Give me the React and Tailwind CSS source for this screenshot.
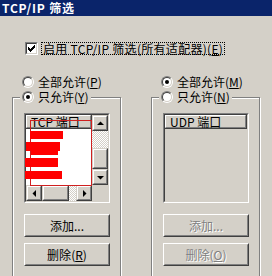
import React from "react";

function Radio({ checked }) {
  return (
    <span className="flex w-[12px] h-[12px] shrink-0 rounded-full border border-t-[#808080] border-l-[#808080] border-r-white border-b-white">
      <span className="flex flex-1 items-center justify-center rounded-full border border-t-[#404040] border-l-[#404040] border-r-[#d4d0c8] border-b-[#d4d0c8] bg-white">
        {checked && <span className="w-[4px] h-[4px] rounded-full bg-black" />}
      </span>
    </span>
  );
}

function Key({ label, k }) {
  return (
    <>
      {label}(<span className="underline underline-offset-1">{k}</span>)
    </>
  );
}

function Raised({ className = "", children }) {
  return (
    <div className={"border border-t-[#d4d0c8] border-l-[#d4d0c8] border-r-[#404040] border-b-[#404040] bg-[#d4d0c8] " + className}>
      <div className="flex w-full h-full items-center justify-center border border-t-white border-l-white border-r-[#808080] border-b-[#808080]">
        {children}
      </div>
    </div>
  );
}

function Arrow({ dir }) {
  const pts = {
    up: "0,5 3.5,1.5 7,5",
    down: "0,2 3.5,5.5 7,2",
    left: "5,0 1.5,3.5 5,7",
    right: "2,0 5.5,3.5 2,7",
  }[dir];
  return (
    <svg width="7" height="7" viewBox="0 0 7 7">
      <polygon points={pts} fill="#000" />
    </svg>
  );
}

const checker =
  "bg-[image:repeating-conic-gradient(#ffffff_0%_25%,#d4d0c8_0%_50%)] bg-[length:2px_2px]";

function Button({ children, disabled }) {
  return (
    <div className="h-[23px] border border-t-white border-l-white border-r-[#404040] border-b-[#404040]">
      <div
        className={
          "flex h-full items-center justify-center border border-t-[#d4d0c8] border-l-[#d4d0c8] border-r-[#808080] border-b-[#808080] " +
          (disabled ? "text-[#808080] [text-shadow:1px_1px_0_#ffffff]" : "text-black")
        }
      >
        {children}
      </div>
    </div>
  );
}

function Sunken({ children, className = "" }) {
  return (
    <div className={"border border-t-[#808080] border-l-[#808080] border-r-white border-b-white " + className}>
      <div className="w-full h-full border border-t-[#404040] border-l-[#404040] border-r-[#d4d0c8] border-b-[#d4d0c8]">
        {children}
      </div>
    </div>
  );
}

function Header({ children }) {
  return (
    <div className="h-[14px] border-r border-b border-r-[#404040] border-b-[#404040]">
      <div className="flex h-full items-center pl-[4px] border border-t-white border-l-white border-r-[#808080] border-b-[#808080] bg-[#d4d0c8]">
        {children}
      </div>
    </div>
  );
}

function Group({ legend, children }) {
  return (
    <div className="relative h-[200px] w-[109px] border border-[#808080] shadow-[inset_1px_1px_0_#ffffff,1px_1px_0_#ffffff] pl-[11px] pt-[15px]">
      <div className="absolute -top-[8px] left-[7px] flex h-[14px] items-center gap-[4px] bg-[#d4d0c8] px-[2px]">
        {legend}
      </div>
      {children}
    </div>
  );
}

function TcpList() {
  return (
    <div className="relative w-[86px] h-[90px]">
      <Sunken className="w-full h-full">
        <div className="grid h-full grid-cols-[66px_16px] grid-rows-[70px_16px]">
          <div className="flex flex-col">
            <Header>TCP 端口</Header>
            <div className="flex-1 bg-white" />
          </div>
          <div className="flex flex-col">
            <Raised className="h-[16px]"><Arrow dir="up" /></Raised>
            <div className={"h-[17px] " + checker} />
            <Raised className="h-[21px]" />
            <Raised className="h-[16px]"><Arrow dir="down" /></Raised>
          </div>
          <div className="flex">
            <Raised className="w-[16px]"><Arrow dir="left" /></Raised>
            <Raised className="w-[27px]" />
            <div className={"w-[7px] " + checker} />
            <Raised className="w-[16px]"><Arrow dir="right" /></Raised>
          </div>
          <div className="bg-[#d4d0c8]" />
        </div>
      </Sunken>
      {/* redaction marks */}
      <div className="absolute left-[6px] top-[7px] w-[62px] h-[66px] border border-[#d02020]" />
      <div className="absolute left-[6px] top-[18px] w-[33px] h-[8px] bg-[#ff0000]" />
      <div className="absolute left-[2px] top-[29px] w-[34px] h-[9px] bg-[#ff0000]" />
      <div className="absolute left-[7px] top-[38px] w-[27px] h-[4px] bg-[#ff0000]" />
      <div className="absolute left-[1px] top-[45px] w-[33px] h-[9px] bg-[#ff0000]" />
      <div className="absolute left-[1px] top-[58px] w-[37px] h-[8px] bg-[#ff0000]" />
    </div>
  );
}

function UdpList() {
  return (
    <Sunken className="w-[86px] h-[90px]">
      <div className="flex h-full flex-col bg-[#d4d0c8]">
        <Header>UDP 端口</Header>
      </div>
    </Sunken>
  );
}

export default function App() {
  return (
    <div className="w-[272px] h-[276px] overflow-hidden bg-[#d4d0c8] font-['Noto_Sans_CJK_SC',sans-serif] text-[12px] leading-[14px] text-black">
      <div className="flex h-[16px] items-center bg-[#0a246a] pl-[2px] text-[12px] font-bold tracking-[0.8px] text-white">
        TCP/IP 筛选
      </div>

      <div className="flex items-center pl-[25px] pt-[26px]">
        <span className="flex w-[13px] h-[13px] border border-t-[#808080] border-l-[#808080] border-r-white border-b-white">
          <span className="flex flex-1 items-center justify-center border border-t-[#404040] border-l-[#404040] border-r-[#d4d0c8] border-b-[#d4d0c8] bg-white">
            <svg width="7" height="7" viewBox="0 0 7 7" shapeRendering="crispEdges">
              <path d="M0 2h1v1h1v1h1V3h1V2h1V1h1V0h1v3H6v1H5v1H4v1H3v1H2V6H1V5H0z" fill="#000" />
            </svg>
          </span>
        </span>
        <span className="ml-[3px] flex h-[13px] items-center border border-dotted border-black px-[1px] tracking-[0.3px]">
          启用 TCP/IP 筛选(所有适配器)<Key label="" k="E" />
        </span>
      </div>

      <div className="mt-[20px] flex gap-[30px] pl-[12px]">
        <div className="flex w-[109px] flex-col">
          <div className="flex h-[14px] items-center gap-[4px] pl-[10px]">
            <Radio />
            <span><Key label="全部允许" k="P" /></span>
          </div>
          <div className="mt-[8px]">
            <Group
              legend={
                <>
                  <Radio checked />
                  <span><Key label="只允许" k="Y" /></span>
                </>
              }
            >
              <TcpList />
              <div className="mt-[11px] flex w-[86px] flex-col gap-[6px]">
                <Button>添加...</Button>
                <Button><Key label="删除" k="R" /></Button>
              </div>
            </Group>
          </div>
        </div>

        <div className="flex w-[109px] flex-col">
          <div className="flex h-[14px] items-center gap-[4px] pl-[10px]">
            <Radio checked />
            <span><Key label="全部允许" k="M" /></span>
          </div>
          <div className="mt-[8px]">
            <Group
              legend={
                <>
                  <Radio />
                  <span><Key label="只允许" k="N" /></span>
                </>
              }
            >
              <UdpList />
              <div className="mt-[11px] flex w-[86px] flex-col gap-[6px]">
                <Button disabled>添加...</Button>
                <Button disabled><Key label="删除" k="O" /></Button>
              </div>
            </Group>
          </div>
        </div>
      </div>
    </div>
  );
}
